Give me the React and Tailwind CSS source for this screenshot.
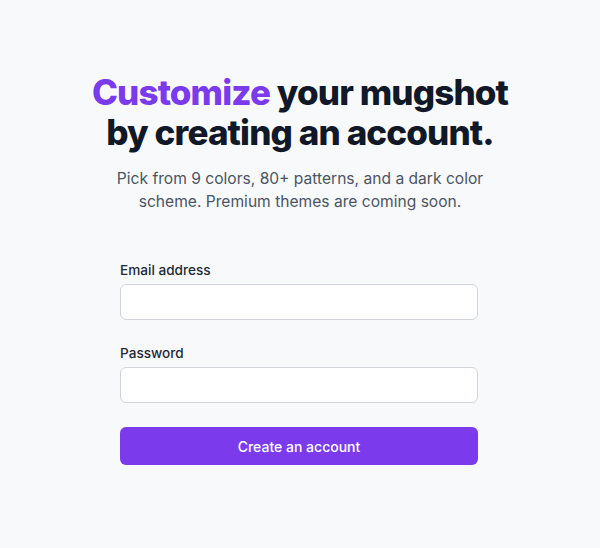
export default function App() {
  return (
    <div className="min-h-[548px] bg-[#f8f9fb] font-['Inter',sans-serif] antialiased">
      <div className="pt-[72px] flex flex-col items-center">
        <h1 className="text-center text-[35px] leading-[40px] font-extrabold tracking-tight text-[#111827]">
          <span className="text-[#7c3aed]">Customize</span> your mugshot
          <br />
          by creating an account.
        </h1>
        <p className="mt-[15px] text-center text-[15.6px] leading-[23px] text-[#4b5563] w-[380px]">
          Pick from 9 colors, 80+ patterns, and a dark color scheme. Premium themes are coming soon.
        </p>
        <form className="mt-[47px] w-[358px] -translate-x-px flex flex-col" onSubmit={(e) => e.preventDefault()}>
          <label className="text-[13.6px] leading-[20px] font-medium text-[#1f2937]">Email address</label>
          <input type="email" className="mt-[4px] h-[36px] w-full rounded-md border border-[#d1d5db] bg-white" />
          <label className="mt-[23px] text-[13.6px] leading-[20px] font-medium text-[#1f2937]">Password</label>
          <input type="password" className="mt-[4px] h-[36px] w-full rounded-md border border-[#d1d5db] bg-white" />
          <button type="submit" className="mt-[24px] h-[38px] w-full rounded-md bg-[#7c3aed] text-white text-[14px] font-medium">
            Create an account
          </button>
        </form>
      </div>
    </div>
  );
}
